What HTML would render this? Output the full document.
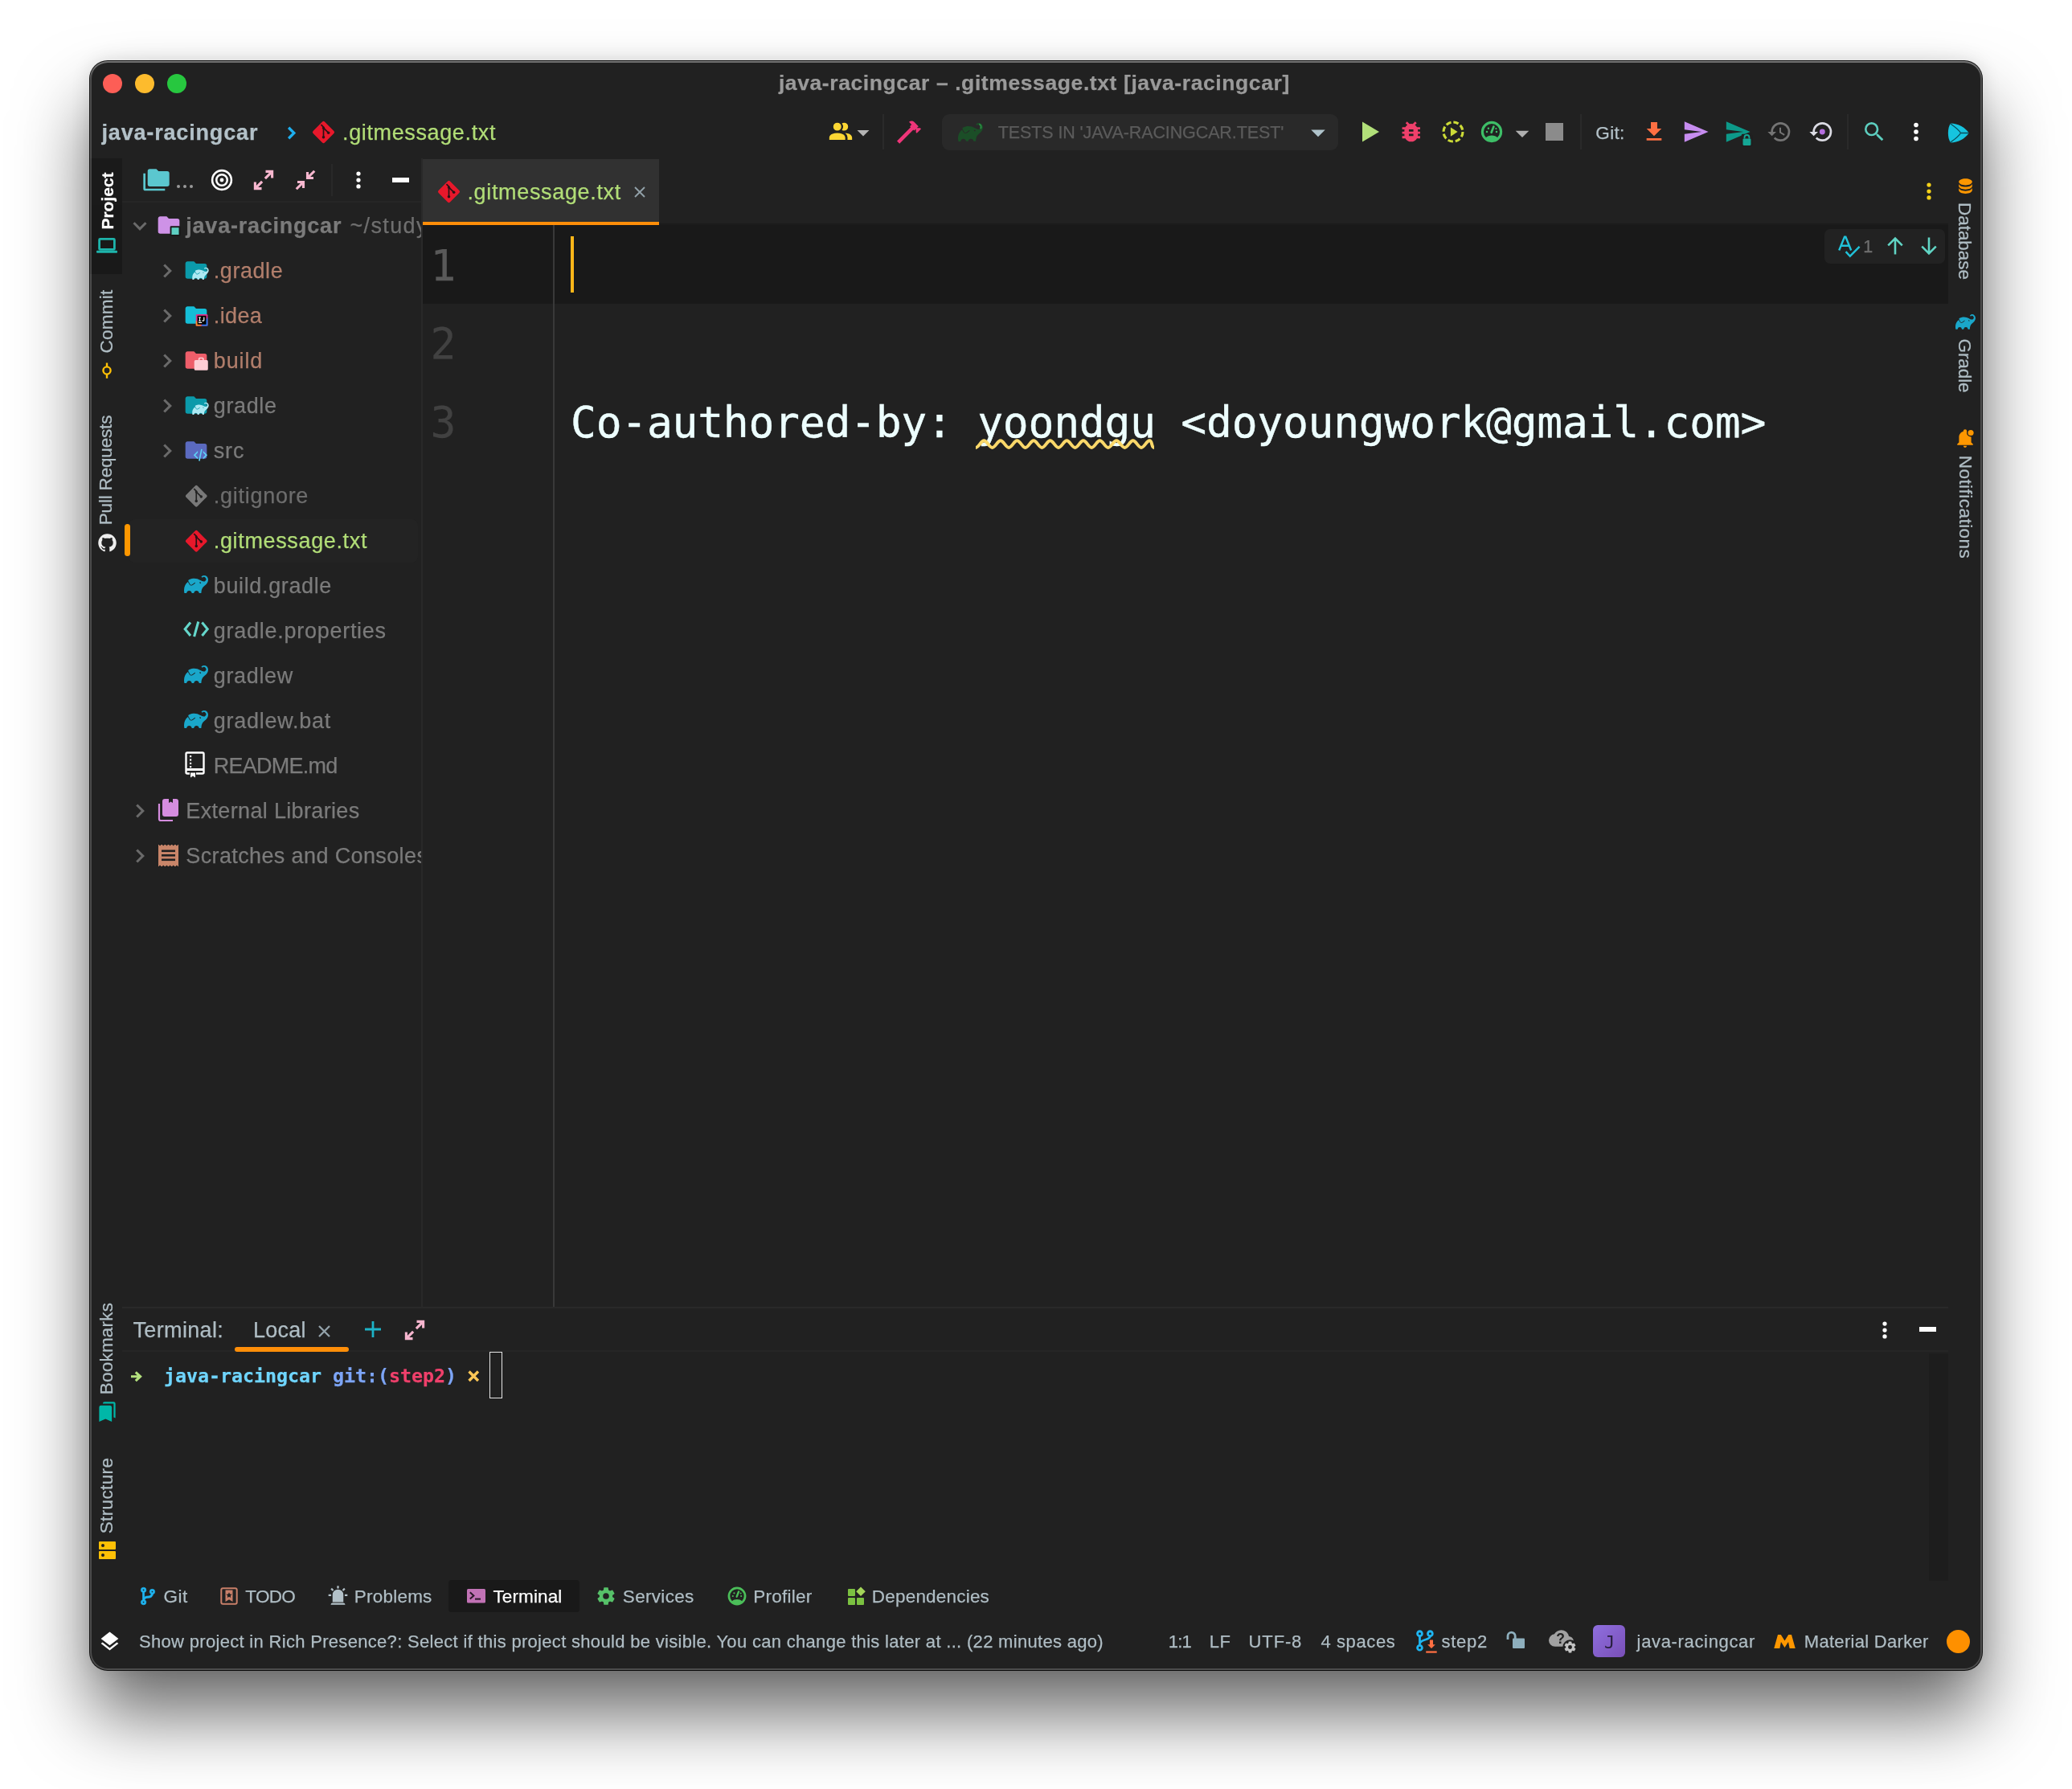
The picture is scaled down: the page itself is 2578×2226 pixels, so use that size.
<!DOCTYPE html>
<html lang="en"><head><meta charset="utf-8"><title>java-racingcar – .gitmessage.txt</title>
<style>
*{margin:0;padding:0;box-sizing:content-box}
html,body{width:2578px;height:2226px;background:#fff;overflow:hidden}
body{font-family:"Liberation Sans","DejaVu Sans",sans-serif;position:relative}
#win{position:absolute;left:112px;top:76px;width:2354px;height:2002px;background:#212121;border-radius:22px;
 box-shadow:0 0 0 1px rgba(0,0,0,.9),0 56px 90px rgba(0,0,0,.58),0 0 24px rgba(0,0,0,.12);}
#win:after{content:"";position:absolute;inset:0;border-radius:22px;box-shadow:inset 0 2px 0 rgba(255,255,255,.22),inset 0 0 0 2px rgba(255,255,255,.2);pointer-events:none}
#c{position:absolute;left:-112px;top:-76px;width:2578px;height:2226px;transform:translateZ(0);opacity:.9999}
.t{position:absolute;white-space:pre;display:block;-webkit-text-stroke-width:.25px}
.i{position:absolute;display:block;overflow:visible}
.b{position:absolute}
.sq{}
</style></head>
<body>
<div id="win"><div id="c">
<div class="b" style="left:127.7px;top:92.0px;width:24.0px;height:24.0px;background:#fe5f57;border-radius:50%;"></div>
<div class="b" style="left:167.8px;top:92.0px;width:24.0px;height:24.0px;background:#febc2e;border-radius:50%;"></div>
<div class="b" style="left:207.8px;top:92.0px;width:24.0px;height:24.0px;background:#28c840;border-radius:50%;"></div>
<span class="t" id="title" style="left:968.9px;top:85.0px;font-size:26.5px;line-height:37px;color:#9b9b9b;font-weight:700;letter-spacing:0.594px;">java-racingcar – .gitmessage.txt [java-racingcar]</span>
<span class="t" id="nav1" style="left:126.5px;top:146.0px;font-size:27px;line-height:38px;color:#b4c2c9;font-weight:700;letter-spacing:0.829px;">java-racingcar</span>
<svg class="i" style="left:348.5px;top:151.5px;" width="27.0" height="27.0" viewBox="0 0 24 24"><path d="M9 6l6 6-6 6" fill="none" stroke="#1fb0f0" stroke-width="2.9"/></svg>
<svg class="i" style="left:387.5px;top:150.0px;" width="29.0" height="29.0" viewBox="0 0 24 24"><rect x="3.600" y="3.600" width="16.800" height="16.800" rx="1.700" transform="rotate(45 12 12)" fill="#e8192c"/><path d="M9.500 4.300L12 6.800V17M12.400 8L17 12.500" fill="none" stroke="#2a1216" stroke-width="1.400"/><circle cx="12" cy="17.200" r="1.450" fill="#2a1216"/><circle cx="17.100" cy="12.600" r="1.450" fill="#2a1216"/><circle cx="12" cy="7.600" r="1.300" fill="#2a1216"/></svg>
<span class="t" id="nav2" style="left:426.1px;top:146.0px;font-size:27px;line-height:38px;color:#b2de78;letter-spacing:0.622px;">.gitmessage.txt</span>
<svg class="i" style="left:1029.0px;top:146.5px;" width="34.0" height="34.0" viewBox="0 0 24 24"><path d="M16 17v2H2v-2s0-4 7-4 7 4 7 4m-3.5-9.5A3.5 3.5 0 1 0 9 11a3.5 3.5 0 0 0 3.5-3.5m3.44 5.5A5.32 5.32 0 0 1 18 17v2h4v-2s0-3.63-6.06-4M15 4a3.39 3.39 0 0 0-1.93.59 5 5 0 0 1 0 5.82A3.39 3.39 0 0 0 15 11a3.5 3.5 0 0 0 0-7z" fill="#fdd835" /></svg>
<svg class="i" style="left:1056.0px;top:147.0px;" width="36.0" height="36.0" viewBox="0 0 24 24"><path d="M7 10l5 5 5-5z" fill="#b5b5b5"/></svg>
<div class="b" style="left:1098.0px;top:142.0px;width:2.0px;height:44.0px;background:#2b2b2b;"></div>
<svg class="i" style="left:1113.0px;top:146.0px;" width="36.0" height="36.0" viewBox="0 0 24 24"><path d="M2 19.63L13.43 8.2l-.71-.71 1.42-1.43L12 3.89c1.2-1.19 3.09-1.19 4.27 0l3.6 3.61-1.42 1.41h2.84l.71.71-3.55 3.59-.71-.71V9.62l-1.47 1.42-.71-.71L4.13 21.76 2 19.63z" fill="#f0367a" /></svg>
<div class="b" style="left:1172.0px;top:142.0px;width:493.0px;height:45.0px;background:#2a2a2a;border-radius:9px;"></div>
<svg class="i" style="left:1192.0px;top:148.5px;" width="31.0" height="31.0" viewBox="0 0 24 24"><path d="M22.695 4.297a3.807 3.807 0 0 0-5.29-.09.368.368 0 0 0 0 .533l.46.47a.363.363 0 0 0 .474.032 2.182 2.182 0 0 1 2.86 3.291c-3.023 3.02-7.056-5.447-16.211-1.083a1.24 1.24 0 0 0-.534 1.745l1.571 2.713a1.238 1.238 0 0 0 1.681.461l.037-.02-.029.02.688-.384a16.083 16.083 0 0 0 2.193-1.635.384.384 0 0 1 .499-.016.357.357 0 0 1 .016.534 16.435 16.435 0 0 1-2.316 1.741H8.77l-.696.39a1.958 1.958 0 0 1-.963.25 1.987 1.987 0 0 1-1.726-.989L3.9 9.696C1.06 11.72-.686 15.603.26 20.522a.363.363 0 0 0 .354.296h1.675a.363.363 0 0 0 .37-.331 2.478 2.478 0 0 1 4.915 0 .36.36 0 0 0 .357.317h1.638a.363.363 0 0 0 .357-.317 2.478 2.478 0 0 1 4.914 0 .363.363 0 0 0 .358.317h1.627a.363.363 0 0 0 .363-.357c.037-2.294.656-4.93 2.42-6.25 6.108-4.57 4.502-8.486 3.088-9.9zm-6.229 6.901l-1.165-.584a.73.73 0 1 1 1.165.587z" fill="#1c4f28" /><path d="M20.2 4.2a2.6 2.6 0 0 1 1.3 4.3" fill="none" stroke="#2a8a42" stroke-width="1.6"/></svg>
<span class="t" id="runcfg" style="left:1241.8px;top:150.0px;font-size:21.5px;line-height:30px;color:#5c5c5c;letter-spacing:-0.108px;">TESTS IN 'JAVA-RACINGCAR.TEST'</span>
<svg class="i" style="left:1619.0px;top:144.0px;" width="42.0" height="42.0" viewBox="0 0 24 24"><path d="M7 10l5 5 5-5z" fill="#b0c4cc"/></svg>
<svg class="i" style="left:1693.5px;top:151.0px;" width="23.0" height="26.0" viewBox="0 0 23 26"><path d="M1 0.5L22 13 1 25.5z" fill="#b2e07a"/></svg>
<svg class="i" style="left:1739.0px;top:147.0px;" width="33.5" height="33.5" viewBox="0 0 24 24"><path d="M14 12h-4v-2h4m0 6h-4v-2h4m6-6h-2.81a5.985 5.985 0 0 0-1.82-1.96L17 4.41 15.59 3l-2.17 2.17a6.002 6.002 0 0 0-2.83 0L8.41 3 7 4.41l1.62 1.63C7.88 6.55 7.26 7.22 6.81 8H4v2h2.09c-.05.33-.09.66-.09 1v1H4v2h2v1c0 .34.04.67.09 1H4v2h2.81c1.04 1.79 2.97 3 5.19 3s4.15-1.21 5.19-3H20v-2h-2.09c.05-.33.09-.66.09-1v-1h2v-2h-2v-1c0-.34-.04-.67-.09-1H20V8z" fill="#f0416c" /></svg>
<svg class="i" style="left:1792.5px;top:149.0px;" width="30.0" height="30.0" viewBox="0 0 24 24"><circle cx="12" cy="12" r="9.6" fill="none" stroke="#cddc39" stroke-width="2.5" stroke-dasharray="5.2 2.34"/><path d="M9.5 7.5v9l7-4.5z" fill="#cddc39"/></svg>
<svg class="i" style="left:1840.5px;top:149.0px;" width="30.0" height="30.0" viewBox="0 0 24 24"><circle cx="12" cy="12" r="9.3" fill="none" stroke="#3fbf68" stroke-width="2.5"/><path d="M5.600 18.400C7.500 16.200 9.800 15.600 12 15.600s4.500 .6 6.400 2.800A8.600 8.600 0 0 1 5.600 18.400z" fill="#3fbf68"/><path d="M11.700 12.600L13.900 6.900" stroke="#3fbf68" stroke-width="2.200" stroke-linecap="round"/><circle cx="7.200" cy="12" r="1" fill="#3fbf68"/><circle cx="8.700" cy="8.600" r="1" fill="#3fbf68"/><circle cx="16.800" cy="12" r="1" fill="#3fbf68"/><circle cx="16.300" cy="8.800" r=".9" fill="#3fbf68"/></svg>
<svg class="i" style="left:1874.0px;top:146.0px;" width="40.0" height="40.0" viewBox="0 0 24 24"><path d="M7 10l5 5 5-5z" fill="#b0b0b0"/></svg>
<div class="b" style="left:1923.0px;top:153.0px;width:22.0px;height:22.0px;background:#8c8c8c;"></div>
<div class="b" style="left:1966.0px;top:142.0px;width:2.0px;height:44.0px;background:#2b2b2b;"></div>
<span class="t" id="gitlbl" style="left:1985.3px;top:149.5px;font-size:22.5px;line-height:31px;color:#b4c2c9;letter-spacing:0.353px;">Git:</span>
<svg class="i" style="left:2042.0px;top:147.5px;" width="32.0" height="32.0" viewBox="0 0 24 24"><path d="M5 20h14v-2H5m14-9h-4V3H9v6H5l7 7 7-7z" fill="#ff7043" /></svg>
<svg class="i" style="left:2093.0px;top:146.5px;" width="34.0" height="34.0" viewBox="0 0 24 24"><path d="M2 21l21-9L2 3v7l15 2-15 2v7z" fill="#c78df0" /></svg>
<svg class="i" style="left:2145.0px;top:146.5px;overflow:visible;" width="34.0" height="34.0" viewBox="0 0 24 24"><path d="M2 21l21-9L2 3v7l15 2-15 2v7z" fill="#0e9a8a" /><rect x="15.4" y="14" width="9.4" height="11" rx="1" fill="#212121"/><rect x="16.6" y="18" width="7" height="6" rx=".8" fill="#16a896"/><path d="M18 18v-1.1a2.1 2.1 0 0 1 4.2 0V18" fill="none" stroke="#16a896" stroke-width="1.3"/></svg>
<svg class="i" style="left:2197.5px;top:147.5px;" width="32.0" height="32.0" viewBox="0 0 24 24"><path d="M13.5 8H12v5l4.28 2.54.72-1.21-3.5-2.08V8M13 3a9 9 0 0 0-9 9H1l3.96 4.03L9 12H6a7 7 0 0 1 7-7 7 7 0 0 1 7 7 7 7 0 0 1-7 7c-1.93 0-3.68-.79-4.94-2.06l-1.42 1.42A8.896 8.896 0 0 0 13 21a9 9 0 0 0 9-9 9 9 0 0 0-9-9" fill="#757575" /></svg>
<svg class="i" style="left:2249.5px;top:147.5px;" width="32.0" height="32.0" viewBox="0 0 24 24"><path d="M13 3a9 9 0 0 0-9 9H1l3.96 4.03L9 12H6a7 7 0 0 1 7-7 7 7 0 0 1 7 7 7 7 0 0 1-7 7c-1.93 0-3.68-.79-4.94-2.06l-1.42 1.42A8.896 8.896 0 0 0 13 21a9 9 0 0 0 9-9 9 9 0 0 0-9-9" fill="#dcdce4" /><circle cx="13" cy="12" r="2.6" fill="#b56fe0"/></svg>
<div class="b" style="left:2298.0px;top:142.0px;width:2.0px;height:44.0px;background:#2b2b2b;"></div>
<svg class="i" style="left:2316.0px;top:147.5px;" width="32.0" height="32.0" viewBox="0 0 24 24"><path d="M9.5 3A6.5 6.5 0 0 1 16 9.5c0 1.61-.59 3.09-1.56 4.23l.27.27h.79l5 5-1.5 1.5-5-5v-.79l-.27-.27A6.516 6.516 0 0 1 9.5 16 6.5 6.5 0 0 1 3 9.5 6.5 6.5 0 0 1 9.5 3m0 2C7 5 5 7 5 9.5S7 14 9.5 14 14 12 14 9.5 12 5 9.5 5z" fill="#5ecfc0" /></svg>
<svg class="i" style="left:2368.5px;top:149.0px;" width="30.0" height="30.0" viewBox="0 0 24 24"><circle cx="12" cy="5.2" r="2.250" fill="#ffffff"/><circle cx="12" cy="12" r="2.250" fill="#ffffff"/><circle cx="12" cy="18.8" r="2.250" fill="#ffffff"/></svg>
<svg class="i" style="left:2421.5px;top:152.5px;" width="28.0" height="25.0" viewBox="0 0 28 25"><path d="M5 0.500C0.800 6 0.800 19 5 24.500C14 24.500 24 19 27.500 12.500C24 6 14 0.500 5 .5z" fill="#17c5e0"/><path d="M4.800 1C9 4 15 8 17.500 12.500C15 17 9 21 4.800 24M17.500 12.500H27" fill="none" stroke="#0b4f5c" stroke-width="1.300"/></svg>
<div class="b" style="left:112.0px;top:197.0px;width:40.0px;height:144.0px;background:#1a1a1a;"></div>
<span class="t" id="vProject" style="left:132.5px;top:249.5px;font-size:21px;line-height:21px;color:#ffffff;transform:translate(-50%,-50%) rotate(-90deg);font-weight:700;letter-spacing:-0.006px;margin-left:-0.00px;">Project</span>
<svg class="i" style="left:120.0px;top:296.0px;" width="26.0" height="19.0" viewBox="0 0 26 19"><rect x="3.600" y="1.400" width="18.800" height="13" rx="1" fill="none" stroke="#1fb5ac" stroke-width="2.800"/><rect x="0" y="15.800" width="26" height="3" rx="1" fill="#1fb5ac"/></svg>
<span class="t" id="vCommit" style="left:132.5px;top:399.9px;font-size:22.5px;line-height:22.5px;color:#b0bec5;transform:translate(-50%,-50%) rotate(-90deg);letter-spacing:0.215px;margin-left:0.11px;">Commit</span>
<svg class="i" style="left:122.0px;top:450.0px;" width="22.0" height="22.0" viewBox="0 0 24 24"><circle cx="12" cy="12" r="5" fill="none" stroke="#ffc107" stroke-width="2.6"/><path d="M12 1.5V7M12 17v5.5" stroke="#ffc107" stroke-width="2.6"/></svg>
<span class="t" id="vPull" style="left:132.5px;top:584.5px;font-size:22.5px;line-height:22.5px;color:#b0bec5;transform:translate(-50%,-50%) rotate(-90deg);letter-spacing:-0.179px;margin-left:-0.09px;">Pull Requests</span>
<svg class="i" style="left:119.5px;top:662.0px;" width="27.0" height="27.0" viewBox="0 0 24 24"><path d="M12 2A10 10 0 0 0 2 12c0 4.42 2.87 8.17 6.84 9.5.5.08.66-.23.66-.5v-1.69c-2.77.6-3.36-1.34-3.36-1.34-.46-1.16-1.11-1.47-1.11-1.47-.91-.62.07-.6.07-.6 1 .07 1.53 1.03 1.53 1.03.87 1.52 2.34 1.07 2.91.83.09-.65.35-1.09.63-1.34-2.22-.25-4.55-1.11-4.55-4.92 0-1.11.38-2 1.03-2.71-.1-.25-.45-1.29.1-2.64 0 0 .84-.27 2.75 1.02.79-.22 1.65-.33 2.5-.33s1.71.11 2.5.33c1.91-1.29 2.75-1.02 2.75-1.02.55 1.35.2 2.39.1 2.64.65.71 1.03 1.6 1.03 2.71 0 3.82-2.34 4.66-4.57 4.91.36.31.69.92.69 1.85V21c0 .27.16.59.67.5C19.14 20.16 22 16.42 22 12A10 10 0 0 0 12 2z" fill="#eeeeee" /></svg>
<span class="t" id="vBook" style="left:132.5px;top:1678.2px;font-size:22.5px;line-height:22.5px;color:#b0bec5;transform:translate(-50%,-50%) rotate(-90deg);letter-spacing:0.191px;margin-left:0.10px;">Bookmarks</span>
<svg class="i" style="left:119.5px;top:1743.0px;" width="27.0" height="27.0" viewBox="0 0 24 24"><path d="M9 1h10a2 2 0 0 1 2 2v16l-2-.87V3H7a2 2 0 0 1 2-2m6 4c1.11 0 2 .9 2 2v16l-7-3-7 3V7a2 2 0 0 1 2-2h10z" fill="#00b8a9" /></svg>
<span class="t" id="vStruct" style="left:132.5px;top:1860.7px;font-size:22.5px;line-height:22.5px;color:#b0bec5;transform:translate(-50%,-50%) rotate(-90deg);letter-spacing:0.360px;margin-left:0.18px;">Structure</span>
<svg class="i" style="left:122.5px;top:1917.5px;" width="21.0" height="22.0" viewBox="0 0 21 22"><rect x="0" y="0" width="21" height="10" rx="1" fill="#ffc107"/><rect x="0" y="12" width="21" height="10" rx="1" fill="#ffc107"/><circle cx="5" cy="5" r="2" fill="#212121"/><circle cx="5" cy="17" r="2" fill="#212121"/></svg>
<div class="b" style="left:152.0px;top:250.0px;width:374.0px;height:2.0px;background:#272727;"></div>
<div class="b" style="left:524.0px;top:197.0px;width:2.0px;height:1430.0px;background:#2a2a2a;"></div>
<svg class="i" style="left:177.5px;top:209.0px;" width="33.0" height="29.0" viewBox="0 1 24 21.500"><path d="M22 4h-8l-2-2H6a2 2 0 0 0-2 2v12a2 2 0 0 0 2 2h16a2 2 0 0 0 2-2V6a2 2 0 0 0-2-2M2 6H0v14a2 2 0 0 0 2 2h18v-2H2V6z" fill="#5cc8d0" /></svg>
<div class="b" style="left:219.8px;top:230.1px;width:4.3px;height:4.3px;background:#9a9a9a;border-radius:50%;"></div>
<div class="b" style="left:227.8px;top:230.1px;width:4.3px;height:4.3px;background:#9a9a9a;border-radius:50%;"></div>
<div class="b" style="left:235.8px;top:230.1px;width:4.3px;height:4.3px;background:#9a9a9a;border-radius:50%;"></div>
<svg class="i" style="left:262.0px;top:209.8px;" width="28.0" height="28.0" viewBox="0 0 24 24"><circle cx="12" cy="12" r="10.200" fill="none" stroke="#fff" stroke-width="2.200"/><circle cx="12" cy="12" r="5.800" fill="none" stroke="#fff" stroke-width="2.200"/><circle cx="12" cy="12" r="2.100" fill="#fff"/></svg>
<svg class="i" style="left:313.0px;top:208.5px;" width="30.0" height="30.0" viewBox="0 0 24 24"><g fill="none" stroke="#f8b8d0" stroke-width="2.500"><path d="M13.500 10.500L20.500 3.500M14 3.500h6.500V10"/><path d="M10.500 13.500L3.500 20.500M10 20.500H3.500V14"/></g></svg>
<svg class="i" style="left:365.0px;top:208.5px;" width="30.0" height="30.0" viewBox="0 0 24 24"><g fill="none" stroke="#f8b8d0" stroke-width="2.500"><path d="M21 3L14 10M20 10H14V4"/><path d="M3 21L10 14M4 14H10v6"/></g></svg>
<div class="b" style="left:412.0px;top:204.0px;width:2.0px;height:40.0px;background:#2a2a2a;"></div>
<svg class="i" style="left:432.0px;top:210.0px;" width="28.0" height="28.0" viewBox="0 0 24 24"><circle cx="12" cy="5.2" r="2.250" fill="#ffffff"/><circle cx="12" cy="12" r="2.250" fill="#ffffff"/><circle cx="12" cy="18.8" r="2.250" fill="#ffffff"/></svg>
<div class="b" style="left:487.5px;top:221.0px;width:21.5px;height:5.5px;background:#ffffff;"></div>
<div class="b" style="left:160.0px;top:646.0px;width:360.0px;height:54.0px;background:#242424;border-radius:8px;"></div>
<div class="b" style="left:154.5px;top:652.0px;width:7.5px;height:39.5px;background:#ff9800;border-radius:4px;"></div>
<div class="b" style="left:152px;top:252px;width:372px;height:900px;overflow:hidden;background:none">
<svg class="i" style="left:7.0px;top:14.0px;" width="30.0" height="30.0" viewBox="0 0 24 24"><path d="M6 9l6 6 6-6" fill="none" stroke="#6b6b6b" stroke-width="2.5"/></svg>
<svg class="i" style="left:42.0px;top:12.0px;" width="32.0" height="32.0" viewBox="0 0 24 24"><path d="M10 4H4c-1.11 0-2 .89-2 2v12a2 2 0 0 0 2 2h16a2 2 0 0 0 2-2V8a2 2 0 0 0-2-2h-8l-2-2z" fill="#cf93e8" /><rect x="13.2" y="13" width="9.6" height="9.4" rx="1" fill="#1a1a1a"/><rect x="14.6" y="14.4" width="6.8" height="6.6" fill="#5fd0c3"/></svg>
<span class="t" id="tree0" style="left:79.3px;top:10.3px;font-size:27px;line-height:38px;color:#7c7c7c;font-weight:700;letter-spacing:0.768px;">java-racingcar</span>
<span class="t" id="treepath" style="left:283.5px;top:10.3px;font-size:27px;line-height:38px;color:#707070;letter-spacing:1.346px;">~/study</span>
<svg class="i" style="left:40.5px;top:70.0px;" width="30.0" height="30.0" viewBox="0 0 24 24"><path d="M9 6l6 6-6 6" fill="none" stroke="#6b6b6b" stroke-width="2.5"/></svg>
<svg class="i" style="left:76.0px;top:68.0px;" width="32.0" height="32.0" viewBox="0 0 24 24"><path d="M10 4H4c-1.11 0-2 .89-2 2v12a2 2 0 0 0 2 2h16a2 2 0 0 0 2-2V8a2 2 0 0 0-2-2h-8l-2-2z" fill="#0c9bab" /><g transform="translate(8.400 7.600) scale(.64)"><path d="M22.695 4.297a3.807 3.807 0 0 0-5.29-.09.368.368 0 0 0 0 .533l.46.47a.363.363 0 0 0 .474.032 2.182 2.182 0 0 1 2.86 3.291c-3.023 3.02-7.056-5.447-16.211-1.083a1.24 1.24 0 0 0-.534 1.745l1.571 2.713a1.238 1.238 0 0 0 1.681.461l.037-.02-.029.02.688-.384a16.083 16.083 0 0 0 2.193-1.635.384.384 0 0 1 .499-.016.357.357 0 0 1 .016.534 16.435 16.435 0 0 1-2.316 1.741H8.77l-.696.39a1.958 1.958 0 0 1-.963.25 1.987 1.987 0 0 1-1.726-.989L3.9 9.696C1.06 11.72-.686 15.603.26 20.522a.363.363 0 0 0 .354.296h1.675a.363.363 0 0 0 .37-.331 2.478 2.478 0 0 1 4.915 0 .36.36 0 0 0 .357.317h1.638a.363.363 0 0 0 .357-.317 2.478 2.478 0 0 1 4.914 0 .363.363 0 0 0 .358.317h1.627a.363.363 0 0 0 .363-.357c.037-2.294.656-4.93 2.42-6.25 6.108-4.57 4.502-8.486 3.088-9.9zm-6.229 6.901l-1.165-.584a.73.73 0 1 1 1.165.587z" fill="#aeeaf4" /></g></svg>
<span class="t" id="tree1" style="left:113.8px;top:66.3px;font-size:27px;line-height:38px;color:#b27f6c;letter-spacing:0.555px;">.gradle</span>
<svg class="i" style="left:40.5px;top:126.0px;" width="30.0" height="30.0" viewBox="0 0 24 24"><path d="M9 6l6 6-6 6" fill="none" stroke="#6b6b6b" stroke-width="2.5"/></svg>
<svg class="i" style="left:76.0px;top:124.0px;" width="32.0" height="32.0" viewBox="0 0 24 24"><path d="M10 4H4c-1.11 0-2 .89-2 2v12a2 2 0 0 0 2 2h16a2 2 0 0 0 2-2V8a2 2 0 0 0-2-2h-8l-2-2z" fill="#16bfd8" /><rect x="11.8" y="11.2" width="11" height="11" rx="1" fill="#e0358e"/><path d="M11.8 17l5.5 5.2h-5.5z" fill="#fd8c2a"/><path d="M22.8 14v8.2h-6z" fill="#2a7df4"/><rect x="13.2" y="12.6" width="8.2" height="8.2" fill="#000"/><rect x="14.2" y="18.6" width="3.2" height=".9" fill="#fff"/><path d="M14.3 13.8h2.2v.8h-.7v2.4h.7v.8h-2.2v-.8h.7v-2.4h-.7zM18.9 13.8h.9v2.8c0 .9-.5 1.3-1.3 1.3-.6 0-1-.3-1.3-.6l.6-.6c.2.2.4.4.7.4.3 0 .4-.2.4-.6z" fill="#fff"/></svg>
<span class="t" id="tree2" style="left:113.8px;top:122.3px;font-size:27px;line-height:38px;color:#b27f6c;letter-spacing:0.357px;">.idea</span>
<svg class="i" style="left:40.5px;top:182.0px;" width="30.0" height="30.0" viewBox="0 0 24 24"><path d="M9 6l6 6-6 6" fill="none" stroke="#6b6b6b" stroke-width="2.5"/></svg>
<svg class="i" style="left:76.0px;top:180.0px;" width="32.0" height="32.0" viewBox="0 0 24 24"><path d="M10 4H4c-1.11 0-2 .89-2 2v12a2 2 0 0 0 2 2h16a2 2 0 0 0 2-2V8a2 2 0 0 0-2-2h-8l-2-2z" fill="#ef5f6b" /><g transform="translate(9 8.200) scale(.64)"><path d="M10 2h4a2 2 0 0 1 2 2v2h4a2 2 0 0 1 2 2v11a2 2 0 0 1-2 2H4a2 2 0 0 1-2-2V8a2 2 0 0 1 2-2h4V4a2 2 0 0 1 2-2m4 4V4h-4v2h4z" fill="#ffcfd6" /></g></svg>
<span class="t" id="tree3" style="left:113.8px;top:178.3px;font-size:27px;line-height:38px;color:#b27f6c;letter-spacing:0.886px;">build</span>
<svg class="i" style="left:40.5px;top:238.0px;" width="30.0" height="30.0" viewBox="0 0 24 24"><path d="M9 6l6 6-6 6" fill="none" stroke="#6b6b6b" stroke-width="2.5"/></svg>
<svg class="i" style="left:76.0px;top:236.0px;" width="32.0" height="32.0" viewBox="0 0 24 24"><path d="M10 4H4c-1.11 0-2 .89-2 2v12a2 2 0 0 0 2 2h16a2 2 0 0 0 2-2V8a2 2 0 0 0-2-2h-8l-2-2z" fill="#0c9bab" /><g transform="translate(8.400 7.600) scale(.64)"><path d="M22.695 4.297a3.807 3.807 0 0 0-5.29-.09.368.368 0 0 0 0 .533l.46.47a.363.363 0 0 0 .474.032 2.182 2.182 0 0 1 2.86 3.291c-3.023 3.02-7.056-5.447-16.211-1.083a1.24 1.24 0 0 0-.534 1.745l1.571 2.713a1.238 1.238 0 0 0 1.681.461l.037-.02-.029.02.688-.384a16.083 16.083 0 0 0 2.193-1.635.384.384 0 0 1 .499-.016.357.357 0 0 1 .016.534 16.435 16.435 0 0 1-2.316 1.741H8.77l-.696.39a1.958 1.958 0 0 1-.963.25 1.987 1.987 0 0 1-1.726-.989L3.9 9.696C1.06 11.72-.686 15.603.26 20.522a.363.363 0 0 0 .354.296h1.675a.363.363 0 0 0 .37-.331 2.478 2.478 0 0 1 4.915 0 .36.36 0 0 0 .357.317h1.638a.363.363 0 0 0 .357-.317 2.478 2.478 0 0 1 4.914 0 .363.363 0 0 0 .358.317h1.627a.363.363 0 0 0 .363-.357c.037-2.294.656-4.93 2.42-6.25 6.108-4.57 4.502-8.486 3.088-9.9zm-6.229 6.901l-1.165-.584a.73.73 0 1 1 1.165.587z" fill="#aeeaf4" /></g></svg>
<span class="t" id="tree4" style="left:113.8px;top:234.3px;font-size:27px;line-height:38px;color:#7c7c7c;letter-spacing:0.626px;">gradle</span>
<svg class="i" style="left:40.5px;top:294.0px;" width="30.0" height="30.0" viewBox="0 0 24 24"><path d="M9 6l6 6-6 6" fill="none" stroke="#6b6b6b" stroke-width="2.5"/></svg>
<svg class="i" style="left:76.0px;top:292.0px;" width="32.0" height="32.0" viewBox="0 0 24 24"><path d="M10 4H4c-1.11 0-2 .89-2 2v12a2 2 0 0 0 2 2h16a2 2 0 0 0 2-2V8a2 2 0 0 0-2-2h-8l-2-2z" fill="#5c6bc0" /><g transform="translate(8.6 9.2) scale(.62)"><path d="M12.89 3l1.96.4L11.11 21l-1.96-.4L12.89 3m6.7 9L16 8.41V5.58L22.42 12 16 18.41v-2.83L19.59 12M1.58 12L8 5.58v2.83L4.41 12 8 15.58v2.83L1.58 12z" fill="#5fd3f7" /></g></svg>
<span class="t" id="tree5" style="left:113.8px;top:290.3px;font-size:27px;line-height:38px;color:#7c7c7c;letter-spacing:0.795px;">src</span>
<svg class="i" style="left:77.5px;top:350.5px;" width="28.5" height="28.5" viewBox="0 0 24 24"><rect x="3.600" y="3.600" width="16.800" height="16.800" rx="1.700" transform="rotate(45 12 12)" fill="#7a7a7a"/><path d="M9.500 4.300L12 6.800V17M12.400 8L17 12.500" fill="none" stroke="#232323" stroke-width="1.400"/><circle cx="12" cy="17.200" r="1.450" fill="#232323"/><circle cx="17.100" cy="12.600" r="1.450" fill="#232323"/><circle cx="12" cy="7.600" r="1.300" fill="#232323"/></svg>
<span class="t" id="tree6" style="left:113.8px;top:346.3px;font-size:27px;line-height:38px;color:#6e6e6e;letter-spacing:0.724px;">.gitignore</span>
<svg class="i" style="left:77.5px;top:406.5px;" width="28.5" height="28.5" viewBox="0 0 24 24"><rect x="3.600" y="3.600" width="16.800" height="16.800" rx="1.700" transform="rotate(45 12 12)" fill="#e8192c"/><path d="M9.500 4.300L12 6.800V17M12.400 8L17 12.500" fill="none" stroke="#2a1216" stroke-width="1.400"/><circle cx="12" cy="17.200" r="1.450" fill="#2a1216"/><circle cx="17.100" cy="12.600" r="1.450" fill="#2a1216"/><circle cx="12" cy="7.600" r="1.300" fill="#2a1216"/></svg>
<span class="t" id="tree7" style="left:113.8px;top:402.3px;font-size:27px;line-height:38px;color:#b2de78;letter-spacing:0.644px;">.gitmessage.txt</span>
<svg class="i" style="left:76.5px;top:460.0px;" width="30.0" height="30.0" viewBox="0 0 24 24"><path d="M22.695 4.297a3.807 3.807 0 0 0-5.29-.09.368.368 0 0 0 0 .533l.46.47a.363.363 0 0 0 .474.032 2.182 2.182 0 0 1 2.86 3.291c-3.023 3.02-7.056-5.447-16.211-1.083a1.24 1.24 0 0 0-.534 1.745l1.571 2.713a1.238 1.238 0 0 0 1.681.461l.037-.02-.029.02.688-.384a16.083 16.083 0 0 0 2.193-1.635.384.384 0 0 1 .499-.016.357.357 0 0 1 .016.534 16.435 16.435 0 0 1-2.316 1.741H8.77l-.696.39a1.958 1.958 0 0 1-.963.25 1.987 1.987 0 0 1-1.726-.989L3.9 9.696C1.06 11.72-.686 15.603.26 20.522a.363.363 0 0 0 .354.296h1.675a.363.363 0 0 0 .37-.331 2.478 2.478 0 0 1 4.915 0 .36.36 0 0 0 .357.317h1.638a.363.363 0 0 0 .357-.317 2.478 2.478 0 0 1 4.914 0 .363.363 0 0 0 .358.317h1.627a.363.363 0 0 0 .363-.357c.037-2.294.656-4.93 2.42-6.25 6.108-4.57 4.502-8.486 3.088-9.9zm-6.229 6.901l-1.165-.584a.73.73 0 1 1 1.165.587z" fill="#1ba8cb" /></svg>
<span class="t" id="tree8" style="left:113.8px;top:458.3px;font-size:27px;line-height:38px;color:#7c7c7c;letter-spacing:0.635px;">build.gradle</span>
<svg class="i" style="left:76.0px;top:520.5px;" width="32.4" height="19.6" viewBox="0 0 32.400 19.600"><path d="M9 1.500L2.200 9.800 9 18.100M23.400 1.500l6.800 8.300-6.800 8.300M18.800 .500L13.600 19.100" fill="none" stroke="#66d8cc" stroke-width="3.100"/></svg>
<span class="t" id="tree9" style="left:113.8px;top:514.3px;font-size:27px;line-height:38px;color:#7c7c7c;letter-spacing:0.729px;">gradle.properties</span>
<svg class="i" style="left:76.5px;top:572.0px;" width="30.0" height="30.0" viewBox="0 0 24 24"><path d="M22.695 4.297a3.807 3.807 0 0 0-5.29-.09.368.368 0 0 0 0 .533l.46.47a.363.363 0 0 0 .474.032 2.182 2.182 0 0 1 2.86 3.291c-3.023 3.02-7.056-5.447-16.211-1.083a1.24 1.24 0 0 0-.534 1.745l1.571 2.713a1.238 1.238 0 0 0 1.681.461l.037-.02-.029.02.688-.384a16.083 16.083 0 0 0 2.193-1.635.384.384 0 0 1 .499-.016.357.357 0 0 1 .016.534 16.435 16.435 0 0 1-2.316 1.741H8.77l-.696.39a1.958 1.958 0 0 1-.963.25 1.987 1.987 0 0 1-1.726-.989L3.9 9.696C1.06 11.72-.686 15.603.26 20.522a.363.363 0 0 0 .354.296h1.675a.363.363 0 0 0 .37-.331 2.478 2.478 0 0 1 4.915 0 .36.36 0 0 0 .357.317h1.638a.363.363 0 0 0 .357-.317 2.478 2.478 0 0 1 4.914 0 .363.363 0 0 0 .358.317h1.627a.363.363 0 0 0 .363-.357c.037-2.294.656-4.93 2.42-6.25 6.108-4.57 4.502-8.486 3.088-9.9zm-6.229 6.901l-1.165-.584a.73.73 0 1 1 1.165.587z" fill="#1ba8cb" /></svg>
<span class="t" id="tree10" style="left:113.8px;top:570.3px;font-size:27px;line-height:38px;color:#7c7c7c;letter-spacing:0.638px;">gradlew</span>
<svg class="i" style="left:76.5px;top:628.0px;" width="30.0" height="30.0" viewBox="0 0 24 24"><path d="M22.695 4.297a3.807 3.807 0 0 0-5.29-.09.368.368 0 0 0 0 .533l.46.47a.363.363 0 0 0 .474.032 2.182 2.182 0 0 1 2.86 3.291c-3.023 3.02-7.056-5.447-16.211-1.083a1.24 1.24 0 0 0-.534 1.745l1.571 2.713a1.238 1.238 0 0 0 1.681.461l.037-.02-.029.02.688-.384a16.083 16.083 0 0 0 2.193-1.635.384.384 0 0 1 .499-.016.357.357 0 0 1 .016.534 16.435 16.435 0 0 1-2.316 1.741H8.77l-.696.39a1.958 1.958 0 0 1-.963.25 1.987 1.987 0 0 1-1.726-.989L3.9 9.696C1.06 11.72-.686 15.603.26 20.522a.363.363 0 0 0 .354.296h1.675a.363.363 0 0 0 .37-.331 2.478 2.478 0 0 1 4.915 0 .36.36 0 0 0 .357.317h1.638a.363.363 0 0 0 .357-.317 2.478 2.478 0 0 1 4.914 0 .363.363 0 0 0 .358.317h1.627a.363.363 0 0 0 .363-.357c.037-2.294.656-4.93 2.42-6.25 6.108-4.57 4.502-8.486 3.088-9.9zm-6.229 6.901l-1.165-.584a.73.73 0 1 1 1.165.587z" fill="#1ba8cb" /></svg>
<span class="t" id="tree11" style="left:113.8px;top:626.3px;font-size:27px;line-height:38px;color:#7c7c7c;letter-spacing:0.728px;">gradlew.bat</span>
<svg class="i" style="left:78.0px;top:683.0px;" width="26.0" height="34.0" viewBox="0 0 26 34"><rect x="1.5" y="1.5" width="22" height="26" rx="1.5" fill="none" stroke="#ffffff" stroke-width="2.4"/><rect x="1.5" y="21" width="22" height="3" fill="#ffffff"/><rect x="6" y="5" width="2.2" height="2.2" fill="#ffffff"/><rect x="6" y="9.4" width="2.2" height="2.2" fill="#ffffff"/><rect x="6" y="13.8" width="2.2" height="2.2" fill="#ffffff"/><rect x="6" y="18" width="2.2" height="2.2" fill="#ffffff"/><path d="M6.5 26h7v7.5l-3.5-2.6-3.5 2.6z" fill="#ffffff" stroke="#212121" stroke-width="1"/></svg>
<span class="t" id="tree12" style="left:113.8px;top:682.3px;font-size:27px;line-height:38px;color:#7c7c7c;letter-spacing:-0.743px;">README.md</span>
<svg class="i" style="left:7.0px;top:742.0px;" width="30.0" height="30.0" viewBox="0 0 24 24"><path d="M9 6l6 6-6 6" fill="none" stroke="#6b6b6b" stroke-width="2.5"/></svg>
<svg class="i" style="left:44.0px;top:742.0px;" width="26.0" height="29.0" viewBox="0 0 26 29"><path d="M2 6v19a2 2 0 0 0 2 2h15" fill="none" stroke="#d68ee0" stroke-width="2.2"/><path d="M9 0h5v5l2.5-1.6L19 5V0h4a3 3 0 0 1 3 3v16a3 3 0 0 1-3 3H9a3 3 0 0 1-3-3V3a3 3 0 0 1 3-3z" fill="#d68ee0"/></svg>
<span class="t" id="tree13" style="left:79.3px;top:738.3px;font-size:27px;line-height:38px;color:#7c7c7c;letter-spacing:0.341px;">External Libraries</span>
<svg class="i" style="left:7.0px;top:798.0px;" width="30.0" height="30.0" viewBox="0 0 24 24"><path d="M9 6l6 6-6 6" fill="none" stroke="#6b6b6b" stroke-width="2.5"/></svg>
<svg class="i" style="left:44.5px;top:798.5px;" width="25.0" height="27.0" viewBox="0 0 25 27"><rect x="0" y="0" width="25" height="27" fill="#c9866a"/><circle cx="2.10" cy="0" r="1.2" fill="#212121"/><circle cx="6.26" cy="0" r="1.2" fill="#212121"/><circle cx="10.42" cy="0" r="1.2" fill="#212121"/><circle cx="14.58" cy="0" r="1.2" fill="#212121"/><circle cx="18.74" cy="0" r="1.2" fill="#212121"/><circle cx="22.90" cy="0" r="1.2" fill="#212121"/><circle cx="2.10" cy="27" r="1.2" fill="#212121"/><circle cx="6.26" cy="27" r="1.2" fill="#212121"/><circle cx="10.42" cy="27" r="1.2" fill="#212121"/><circle cx="14.58" cy="27" r="1.2" fill="#212121"/><circle cx="18.74" cy="27" r="1.2" fill="#212121"/><circle cx="22.90" cy="27" r="1.2" fill="#212121"/><rect x="4" y="6.5" width="17" height="2.6" fill="#212121"/><rect x="4" y="12" width="17" height="2.6" fill="#212121"/><rect x="4" y="17.5" width="17" height="2.6" fill="#212121"/></svg>
<span class="t" id="tree14" style="left:79.3px;top:794.3px;font-size:27px;line-height:38px;color:#7c7c7c;letter-spacing:0.377px;">Scratches and Consoles</span>
</div>
<div class="b" style="left:526.0px;top:278.0px;width:1898.0px;height:2.0px;background:#1c1c1c;"></div>
<div class="b" style="left:526.0px;top:197.5px;width:294.0px;height:82.5px;background:#323232;"></div>
<div class="b" style="left:526.0px;top:276.0px;width:294.0px;height:4.0px;background:#ff8f0a;"></div>
<svg class="i" style="left:543.5px;top:223.5px;" width="29.0" height="29.0" viewBox="0 0 24 24"><rect x="3.600" y="3.600" width="16.800" height="16.800" rx="1.700" transform="rotate(45 12 12)" fill="#e8192c"/><path d="M9.500 4.300L12 6.800V17M12.400 8L17 12.500" fill="none" stroke="#2a1216" stroke-width="1.400"/><circle cx="12" cy="17.200" r="1.450" fill="#2a1216"/><circle cx="17.100" cy="12.600" r="1.450" fill="#2a1216"/><circle cx="12" cy="7.600" r="1.300" fill="#2a1216"/></svg>
<span class="t" id="tab" style="left:581.4px;top:220.0px;font-size:27px;line-height:38px;color:#b2de78;letter-spacing:0.665px;">.gitmessage.txt</span>
<svg class="i" style="left:786.0px;top:229.0px;" width="20.0" height="20.0" viewBox="0 0 20 20"><path d="M4 4l12 12M16 4L4 16" stroke="#93a2aa" stroke-width="1.9" fill="none"/></svg>
<svg class="i" style="left:2386.0px;top:224.0px;" width="28.0" height="28.0" viewBox="0 0 24 24"><circle cx="12" cy="5.2" r="2.250" fill="#f5d21a"/><circle cx="12" cy="12" r="2.250" fill="#f5d21a"/><circle cx="12" cy="18.8" r="2.250" fill="#f5d21a"/></svg>
<div class="b" style="left:526.0px;top:280.0px;width:1898.0px;height:97.5px;background:#1a1a1a;"></div>
<div class="b" style="left:688.0px;top:280.0px;width:2.0px;height:1347.0px;background:#3a3a3a;"></div>
<div class="b" style="left:710.0px;top:294.0px;width:4.0px;height:69.5px;background:#ffb71a;"></div>
<span class="t" id="ln0" style="left:535.5px;top:280.2px;font-size:53px;line-height:97px;color:#5a5a5a;font-family:'DejaVu Sans Mono','Liberation Mono',monospace;top:281.6px;">1</span>
<span class="t" id="ln1" style="left:535.5px;top:377.8px;font-size:53px;line-height:97px;color:#424242;font-family:'DejaVu Sans Mono','Liberation Mono',monospace;top:379.1px;">2</span>
<span class="t" id="ln2" style="left:535.5px;top:475.2px;font-size:53px;line-height:97px;color:#424242;font-family:'DejaVu Sans Mono','Liberation Mono',monospace;top:476.6px;">3</span>
<span class="t" id="code" style="left:710px;top:476.6px;font-size:53px;line-height:97px;color:#eeffff;font-family:'DejaVu Sans Mono','Liberation Mono',monospace;letter-spacing:-0.27px;-webkit-text-stroke:.4px #eeffff">Co-authored-by: <span class="sq">yoondgu</span> &lt;doyoungwork@gmail.com&gt;</span>
<svg class="i" style="left:0;top:0" width="2578" height="700" viewBox="0 0 2578 700"><path d="M1214 556.9 C1217.7 556.9 1220.6 548.3 1224.3 548.3 C1228.0 548.3 1230.9 556.9 1234.6 556.9 C1238.3 556.9 1241.2 548.3 1244.9 548.3 C1248.6 548.3 1251.5 556.9 1255.2 556.9 C1258.9 556.9 1261.8 548.3 1265.5 548.3 C1269.2 548.3 1272.1 556.9 1275.8 556.9 C1279.5 556.9 1282.4 548.3 1286.1 548.3 C1289.8 548.3 1292.7 556.9 1296.4 556.9 C1300.1 556.9 1303.0 548.3 1306.7 548.3 C1310.4 548.3 1313.3 556.9 1317.0 556.9 C1320.7 556.9 1323.6 548.3 1327.3 548.3 C1331.0 548.3 1333.9 556.9 1337.6 556.9 C1341.3 556.9 1344.2 548.3 1347.9 548.3 C1351.6 548.3 1354.5 556.9 1358.2 556.9 C1361.9 556.9 1364.8 548.3 1368.5 548.3 C1372.2 548.3 1375.1 556.9 1378.8 556.9 C1382.5 556.9 1385.4 548.3 1389.1 548.3 C1392.8 548.3 1395.7 556.9 1399.4 556.9 C1403.1 556.9 1406.0 548.3 1409.7 548.3 C1413.4 548.3 1416.3 556.9 1420.0 556.9 C1423.7 556.9 1426.6 548.3 1430.3 548.3 C1434.0 548.3 1432.3 556.9 1436.0 556.9" fill="none" stroke="#fbd96b" stroke-width="4"/></svg>
<div class="b" style="left:2270.0px;top:284.5px;width:150.0px;height:43.5px;background:#232323;border-radius:7px;"></div>
<svg class="i" style="left:2286.0px;top:292.0px;" width="30.0" height="30.0" viewBox="0 0 30 30"><path d="M2.200 19.500L9 2.800h1.400L17.200 19.500M4.800 13.800h9.800" fill="none" stroke="#22c3da" stroke-width="2.400"/><path d="M10.600 21.200l5.200 5.600L27.600 14.800" fill="none" stroke="#22c3da" stroke-width="2.500"/></svg>
<span class="t" id="insp1" style="left:2318.3px;top:291.5px;font-size:21.5px;line-height:30px;color:#707070;">1</span>
<svg class="i" style="left:2344.0px;top:292.0px;" width="28.0" height="28.0" viewBox="0 0 24 24"><path d="M12 21V4M4.5 11.5L12 4l7.500 7.5" fill="none" stroke="#62d6c6" stroke-width="2.2"/></svg>
<svg class="i" style="left:2386.0px;top:292.0px;" width="28.0" height="28.0" viewBox="0 0 24 24"><path d="M12 3v17M4.5 12.500L12 20l7.500-7.500" fill="none" stroke="#62d6c6" stroke-width="2.2"/></svg>
<svg class="i" style="left:2432.5px;top:218.5px;" width="25.0" height="25.0" viewBox="0 0 24 24"><path d="M12 3C7.58 3 4 4.79 4 7s3.58 4 8 4 8-1.79 8-4-3.58-4-8-4M4 9v3c0 2.21 3.58 4 8 4s8-1.79 8-4V9c0 2.21-3.58 4-8 4s-8-1.79-8-4m0 5v3c0 2.21 3.58 4 8 4s8-1.79 8-4v-3c0 2.21-3.58 4-8 4s-8-1.79-8-4z" fill="#ff9800" /></svg>
<span class="t" id="vDb" style="left:2444.5px;top:299.5px;font-size:22.5px;line-height:22.5px;color:#b0bec5;transform:translate(-50%,-50%) rotate(90deg);letter-spacing:-0.050px;margin-left:-0.03px;">Database</span>
<svg class="i" style="left:2432.5px;top:388.0px;transform:rotate(0deg);" width="25.0" height="25.0" viewBox="0 0 24 24"><path d="M22.695 4.297a3.807 3.807 0 0 0-5.29-.09.368.368 0 0 0 0 .533l.46.47a.363.363 0 0 0 .474.032 2.182 2.182 0 0 1 2.86 3.291c-3.023 3.02-7.056-5.447-16.211-1.083a1.24 1.24 0 0 0-.534 1.745l1.571 2.713a1.238 1.238 0 0 0 1.681.461l.037-.02-.029.02.688-.384a16.083 16.083 0 0 0 2.193-1.635.384.384 0 0 1 .499-.016.357.357 0 0 1 .016.534 16.435 16.435 0 0 1-2.316 1.741H8.77l-.696.39a1.958 1.958 0 0 1-.963.25 1.987 1.987 0 0 1-1.726-.989L3.9 9.696C1.06 11.72-.686 15.603.26 20.522a.363.363 0 0 0 .354.296h1.675a.363.363 0 0 0 .37-.331 2.478 2.478 0 0 1 4.915 0 .36.36 0 0 0 .357.317h1.638a.363.363 0 0 0 .357-.317 2.478 2.478 0 0 1 4.914 0 .363.363 0 0 0 .358.317h1.627a.363.363 0 0 0 .363-.357c.037-2.294.656-4.93 2.42-6.25 6.108-4.57 4.502-8.486 3.088-9.9zm-6.229 6.901l-1.165-.584a.73.73 0 1 1 1.165.587z" fill="#1ba8cb" /></svg>
<span class="t" id="vGr" style="left:2444.5px;top:454.8px;font-size:22.5px;line-height:22.5px;color:#b0bec5;transform:translate(-50%,-50%) rotate(90deg);letter-spacing:-0.074px;margin-left:-0.04px;">Gradle</span>
<svg class="i" style="left:2432.0px;top:532.0px;" width="26.0" height="26.0" viewBox="0 0 24 24"><path d="M21 19v1H3v-1l2-2v-6c0-3.1 2.03-5.83 5-6.71V4a2 2 0 0 1 2-2 2 2 0 0 1 2 2v.29c2.97.88 5 3.61 5 6.71v6l2 2m-7 2a2 2 0 0 1-2 2 2 2 0 0 1-2-2" fill="#ff9800" /><circle cx="18.5" cy="6" r="4.600" fill="#212121"/><circle cx="18.5" cy="6" r="3.300" fill="#ff9800"/></svg>
<span class="t" id="vNo" style="left:2444.5px;top:630.8px;font-size:22.5px;line-height:22.5px;color:#b0bec5;transform:translate(-50%,-50%) rotate(90deg);letter-spacing:0.459px;margin-left:0.23px;">Notifications</span>
<div class="b" style="left:152.0px;top:1626.0px;width:2272.0px;height:2.0px;background:#2a2a2a;"></div>
<div class="b" style="left:152.0px;top:1680.0px;width:2272.0px;height:2.0px;background:#272727;"></div>
<span class="t" id="termlbl" style="left:165.5px;top:1636.0px;font-size:27px;line-height:38px;color:#b0bec5;letter-spacing:0.345px;">Terminal:</span>
<span class="t" id="termlocal" style="left:315.1px;top:1636.0px;font-size:27px;line-height:38px;color:#b0bec5;letter-spacing:0.186px;">Local</span>
<svg class="i" style="left:394.0px;top:1647.0px;" width="19.0" height="19.0" viewBox="0 0 19 19"><path d="M3 3l13 13M16 3L3 16" stroke="#93a2aa" stroke-width="2.400" fill="none"/></svg>
<div class="b" style="left:292.0px;top:1676.0px;width:142.0px;height:6.0px;background:#ff8f0a;border-radius:3px;"></div>
<svg class="i" style="left:453.0px;top:1643.0px;" width="22.0" height="22.0" viewBox="0 0 22 22"><path d="M11 1v20M1 11h20" stroke="#1eb4c8" stroke-width="2.8" fill="none"/></svg>
<svg class="i" style="left:501.0px;top:1639.5px;" width="30.0" height="30.0" viewBox="0 0 24 24"><g fill="none" stroke="#f6b6cf" stroke-width="2.500"><path d="M13.500 10.500L20.500 3.500M14 3.500h6.500V10"/><path d="M10.500 13.500L3.500 20.500M10 20.500H3.500V14"/></g></svg>
<svg class="i" style="left:2331.0px;top:1641.0px;" width="28.0" height="28.0" viewBox="0 0 24 24"><circle cx="12" cy="5.2" r="2.250" fill="#ffffff"/><circle cx="12" cy="12" r="2.250" fill="#ffffff"/><circle cx="12" cy="18.8" r="2.250" fill="#ffffff"/></svg>
<div class="b" style="left:2387.5px;top:1651.0px;width:21.5px;height:5.5px;background:#ffffff;"></div>
<div class="b" style="left:2400.0px;top:1684.0px;width:24.0px;height:283.0px;background:#1e1e1e;"></div>
<span class="t" id="term" style="left:204px;top:1684.0px;font-size:23.3px;line-height:56px;font-weight:700;font-family:'DejaVu Sans Mono','Liberation Mono',monospace;letter-spacing:-0.03px"><span style="color:#70d6ff">java-racingcar</span> <span style="color:#7ea6f7">git:(</span><span style="color:#f0416c">step2</span><span style="color:#7ea6f7">)</span></span>
<svg class="i" style="left:161.5px;top:1704.5px;" width="15.5" height="15.5" viewBox="0 0 16 16"><path d="M1 8h11M7 2.500l6 5.500-6 5.500" fill="none" stroke="#b5e27f" stroke-width="3.2"/></svg>
<svg class="i" style="left:582.0px;top:1705.0px;" width="14.5" height="14.5" viewBox="0 0 14 14"><path d="M1.500 1.500l11 11M12.500 1.500l-11 11" fill="none" stroke="#ffc857" stroke-width="3.3"/></svg>
<div class="b" style="left:609.0px;top:1682.0px;width:16.0px;height:57.5px;background:none;border:1.500px solid #e8e8e8;box-sizing:border-box;"></div>
<svg class="i" style="left:171.0px;top:1973.0px;" width="26.0" height="26.0" viewBox="0 0 24 24"><path d="M13 14c-3.36 0-4.46 1.35-4.82 2.24C9.25 16.7 10 17.76 10 19a3 3 0 0 1-3 3 3 3 0 0 1-3-3c0-1.31.83-2.42 2-2.83V7.83A2.99 2.99 0 0 1 4 5a3 3 0 0 1 3-3 3 3 0 0 1 3 3c0 1.31-.83 2.42-2 2.83v5.29c.88-.65 2.16-1.12 4-1.12 2.67 0 3.56-1.34 3.85-2.23A3.006 3.006 0 0 1 14 7a3 3 0 0 1 3-3 3 3 0 0 1 3 3c0 1.34-.88 2.5-2.09 2.86C17.65 11.29 16.68 14 13 14m-6 4a1 1 0 0 0-1 1 1 1 0 0 0 1 1 1 1 0 0 0 1-1 1 1 0 0 0-1-1M7 4a1 1 0 0 0-1 1 1 1 0 0 0 1 1 1 1 0 0 0 1-1 1 1 0 0 0-1-1m10 2a1 1 0 0 0-1 1 1 1 0 0 0 1 1 1 1 0 0 0 1-1 1 1 0 0 0-1-1z" fill="#1fb6f2" stroke="#1fb6f2" stroke-width=".6"/></svg>
<span class="t" id="bGit" style="left:203.5px;top:1970.5px;font-size:22.5px;line-height:31px;color:#b0bec5;letter-spacing:0.505px;">Git</span>
<svg class="i" style="left:274.0px;top:1975.0px;" width="22.0" height="22.0" viewBox="0 0 22 22"><rect x="1.300" y="1.300" width="19.400" height="19.400" rx="2" fill="none" stroke="#c9806a" stroke-width="2"/><path d="M6.500 3.500h9v14.500l-4.500-2.700L6.500 18z" fill="#c9806a"/><path d="M11 6.200l1.100 2.300 2.500.3-1.800 1.700.4 2.500-2.200-1.200-2.200 1.200.4-2.500-1.800-1.700 2.500-.3z" fill="#212121"/></svg>
<span class="t" id="bTodo" style="left:305.3px;top:1970.5px;font-size:22.5px;line-height:31px;color:#b0bec5;letter-spacing:-0.673px;">TODO</span>
<svg class="i" style="left:406.5px;top:1971.5px;" width="27.0" height="27.0" viewBox="0 0 24 24"><path d="M6 6.9L3.87 4.78l1.41-1.41L7.4 5.5 6 6.9M13 1v3h-2V1h2m7.13 3.78L18 6.9l-1.4-1.4 2.12-2.13 1.41 1.41M4.5 10.5v2h-3v-2h3m15 0h3v2h-3v-2M6 20h12a2 2 0 0 1 2 2H4a2 2 0 0 1 2-2m6-15a6 6 0 0 1 6 6v8H6v-8a6 6 0 0 1 6-6z" fill="#b4c2c9" /></svg>
<span class="t" id="bProb" style="left:440.8px;top:1970.5px;font-size:22.5px;line-height:31px;color:#b0bec5;letter-spacing:0.218px;">Problems</span>
<div class="b" style="left:558.0px;top:1966.0px;width:163.0px;height:40.0px;background:#1a1a1a;border-radius:4px;"></div>
<svg class="i" style="left:581.0px;top:1977.0px;" width="23.0" height="17.5" viewBox="0 0 23 17.500"><rect width="23" height="17.500" rx="1.500" fill="#c273b6"/><path d="M3.800 4.200l4.600 4.200-4.600 4.200" fill="none" stroke="#2a1a28" stroke-width="2"/><rect x="10" y="11.600" width="7" height="2" fill="#2a1a28"/></svg>
<span class="t" id="bTerm" style="left:613.5px;top:1970.5px;font-size:22.5px;line-height:31px;color:#ffffff;letter-spacing:0.121px;">Terminal</span>
<svg class="i" style="left:741.0px;top:1973.0px;" width="26.0" height="26.0" viewBox="0 0 24 24"><path d="M12 15.5A3.5 3.5 0 0 1 8.5 12 3.5 3.5 0 0 1 12 8.5a3.5 3.5 0 0 1 3.5 3.5 3.5 3.5 0 0 1-3.5 3.5m7.43-2.53c.04-.32.07-.64.07-.97 0-.33-.03-.66-.07-1l2.11-1.63c.19-.15.24-.42.12-.64l-2-3.46c-.12-.22-.39-.31-.61-.22l-2.49 1c-.52-.39-1.06-.73-1.69-.98l-.37-2.65A.506.506 0 0 0 14 2h-4c-.25 0-.46.18-.5.42l-.37 2.65c-.63.25-1.17.59-1.69.98l-2.49-1c-.22-.09-.49 0-.61.22l-2 3.46c-.13.22-.07.49.12.64L4.57 11c-.04.34-.07.67-.07 1 0 .33.03.65.07.97l-2.11 1.66c-.19.15-.25.42-.12.64l2 3.46c.12.22.39.3.61.22l2.49-1.01c.52.4 1.06.74 1.69.99l.37 2.65c.04.24.25.42.5.42h4c.25 0 .46-.18.5-.42l.37-2.65c.63-.26 1.17-.59 1.69-.99l2.49 1.01c.22.08.49 0 .61-.22l2-3.46c.12-.22.07-.49-.12-.64l-2.11-1.66z" fill="#57c26a" /></svg>
<span class="t" id="bServ" style="left:774.8px;top:1970.5px;font-size:22.5px;line-height:31px;color:#b0bec5;letter-spacing:0.328px;">Services</span>
<svg class="i" style="left:904.0px;top:1973.0px;" width="26.0" height="26.0" viewBox="0 0 24 24"><circle cx="12" cy="12" r="9.3" fill="none" stroke="#4cbf5a" stroke-width="2.5"/><path d="M5.600 18.400C7.500 16.200 9.800 15.600 12 15.600s4.500 .6 6.400 2.800A8.600 8.600 0 0 1 5.600 18.400z" fill="#4cbf5a"/><path d="M11.700 12.600L13.900 6.900" stroke="#4cbf5a" stroke-width="2.200" stroke-linecap="round"/><circle cx="7.200" cy="12" r="1" fill="#4cbf5a"/><circle cx="8.700" cy="8.600" r="1" fill="#4cbf5a"/><circle cx="16.800" cy="12" r="1" fill="#4cbf5a"/><circle cx="16.300" cy="8.800" r=".9" fill="#4cbf5a"/></svg>
<span class="t" id="bProf" style="left:937.2px;top:1970.5px;font-size:22.5px;line-height:31px;color:#b0bec5;letter-spacing:0.271px;">Profiler</span>
<svg class="i" style="left:1053.5px;top:1974.0px;" width="24.0" height="24.0" viewBox="0 0 24 24"><rect x="1" y="3" width="9" height="9" rx="1" fill="#7cc242"/><rect x="1" y="14" width="9" height="9" rx="1" fill="#7cc242"/><rect x="12" y="14" width="9" height="9" rx="1" fill="#7cc242"/><path d="M17 .500l5.800 5.800-5.800 5.800-5.800-5.800z" fill="#a4d65a"/></svg>
<span class="t" id="bDep" style="left:1084.8px;top:1970.5px;font-size:22.5px;line-height:31px;color:#b0bec5;letter-spacing:0.201px;">Dependencies</span>
<svg class="i" style="left:122.0px;top:2028.0px;" width="29.0" height="29.0" viewBox="0 0 24 24"><path d="M12 16l7.36-5.73L21 9l-9-7-9 7 1.63 1.27M12 18.54l-7.38-5.73L3 14.07l9 7 9-7-1.63-1.27L12 18.54z" fill="#ffffff" /></svg>
<span class="t" id="sMsg" style="left:173.0px;top:2027.0px;font-size:22px;line-height:31px;color:#b0bec5;letter-spacing:0.311px;">Show project in Rich Presence?: Select if this project should be visible. You can change this later at ... (22 minutes ago)</span>
<span class="t" id="sPos" style="left:1453.8px;top:2027.0px;font-size:22px;line-height:31px;color:#b0bec5;letter-spacing:-0.827px;">1:1</span>
<span class="t" id="sLF" style="left:1504.8px;top:2027.0px;font-size:22px;line-height:31px;color:#b0bec5;letter-spacing:0.352px;">LF</span>
<span class="t" id="sUtf" style="left:1553.6px;top:2027.0px;font-size:22px;line-height:31px;color:#b0bec5;letter-spacing:0.853px;">UTF-8</span>
<span class="t" id="sSp" style="left:1643.4px;top:2027.0px;font-size:22px;line-height:31px;color:#b0bec5;letter-spacing:0.625px;">4 spaces</span>
<svg class="i" style="left:1761.0px;top:2028.0px;" width="27.5" height="29.0" viewBox="0 0 26 28"><g fill="none" stroke="#1fb6f2" stroke-width="2.700"><circle cx="5" cy="4.500" r="2.800"/><circle cx="5" cy="21.500" r="2.800"/><circle cx="17.500" cy="4.500" r="2.800"/><path d="M5 7.500v11M17.500 7.500c0 5-9 3-12 8"/></g><path d="M16.500 11.500h5v5.500h3.500l-6 6-6-6h3.500z" fill="#ff7043" stroke="#212121" stroke-width="1"/><rect x="12.500" y="25.500" width="13" height="2.200" fill="#ff7043"/></svg>
<span class="t" id="sBr" style="left:1793.4px;top:2027.0px;font-size:22px;line-height:31px;color:#b0bec5;letter-spacing:0.778px;">step2</span>
<svg class="i" style="left:1873.5px;top:2029.0px;" width="23.0" height="22.0" viewBox="0 0 23 22"><rect x="8" y="9.500" width="15" height="12.500" rx="1" fill="#8fb0be"/><path d="M2 11V6.800a4.600 4.600 0 0 1 9.200 0V10" fill="none" stroke="#8fb0be" stroke-width="2.800"/></svg>
<svg class="i" style="left:1927.0px;top:2023.0px;" width="31.0" height="31.0" viewBox="0 0 24 24"><path d="M19.35 10.03A7.49 7.49 0 0 0 12 4C9.11 4 6.6 5.64 5.35 8.03A5.994 5.994 0 0 0 0 14a6 6 0 0 0 6 6h13a5 5 0 0 0 5-5c0-2.64-2.05-4.78-4.65-4.97z" fill="#a2a2a2" /><text x="11.200" y="17.300" font-size="13.500" font-weight="700" font-family="Liberation Sans,sans-serif" fill="#212121" text-anchor="middle">?</text></svg>
<svg class="i" style="left:1944.5px;top:2041.0px;" width="17.0" height="17.0" viewBox="0 0 24 24"><circle cx="12" cy="12" r="13" fill="#212121"/><path d="M12 15.5A3.5 3.5 0 0 1 8.5 12 3.5 3.5 0 0 1 12 8.5a3.5 3.5 0 0 1 3.5 3.5 3.5 3.5 0 0 1-3.5 3.5m7.43-2.53c.04-.32.07-.64.07-.97 0-.33-.03-.66-.07-1l2.11-1.63c.19-.15.24-.42.12-.64l-2-3.46c-.12-.22-.39-.31-.61-.22l-2.49 1c-.52-.39-1.06-.73-1.69-.98l-.37-2.65A.506.506 0 0 0 14 2h-4c-.25 0-.46.18-.5.42l-.37 2.65c-.63.25-1.17.59-1.69.98l-2.49-1c-.22-.09-.49 0-.61.22l-2 3.46c-.13.22-.07.49.12.64L4.57 11c-.04.34-.07.67-.07 1 0 .33.03.65.07.97l-2.11 1.66c-.19.15-.25.42-.12.64l2 3.46c.12.22.39.3.61.22l2.49-1.01c.52.4 1.06.74 1.69.99l.37 2.65c.04.24.25.42.5.42h4c.25 0 .46-.18.5-.42l.37-2.65c.63-.26 1.17-.59 1.69-.99l2.49 1.01c.22.08.49 0 .61-.22l2-3.46c.12-.22.07-.49-.12-.64l-2.11-1.66z" fill="#c4c4c4" /></svg>
<div class="b" style="left:1982.0px;top:2022.0px;width:40.0px;height:40.0px;background:linear-gradient(135deg,#9070e0,#7a50b8);border-radius:6px;"></div>
<span class="t" id="sJ" style="left:1996.0px;top:2027.5px;font-size:22px;line-height:31px;color:#2a2040;font-family:'DejaVu Sans Mono','Liberation Mono',monospace;-webkit-text-stroke-width:0;">J</span>
<span class="t" id="sProj" style="left:2036.6px;top:2027.0px;font-size:22px;line-height:31px;color:#b0bec5;letter-spacing:0.659px;">java-racingcar</span>
<svg class="i" style="left:2206.5px;top:2033.5px;" width="27.0" height="17.0" viewBox="0 0 28 18"><path d="M0 18L5 0h4l5 8 5-8h4l5 18h-7.500l-1.700-8.500L14 17l-4.800-7.500L7.500 18z" fill="#ff9800"/></svg>
<span class="t" id="sTheme" style="left:2244.8px;top:2027.0px;font-size:22px;line-height:31px;color:#b0bec5;letter-spacing:0.297px;">Material Darker</span>
<div class="b" style="left:2421.5px;top:2028.0px;width:29.0px;height:29.0px;background:#ff9100;border-radius:50%;"></div>
</div></div>
</body></html>
